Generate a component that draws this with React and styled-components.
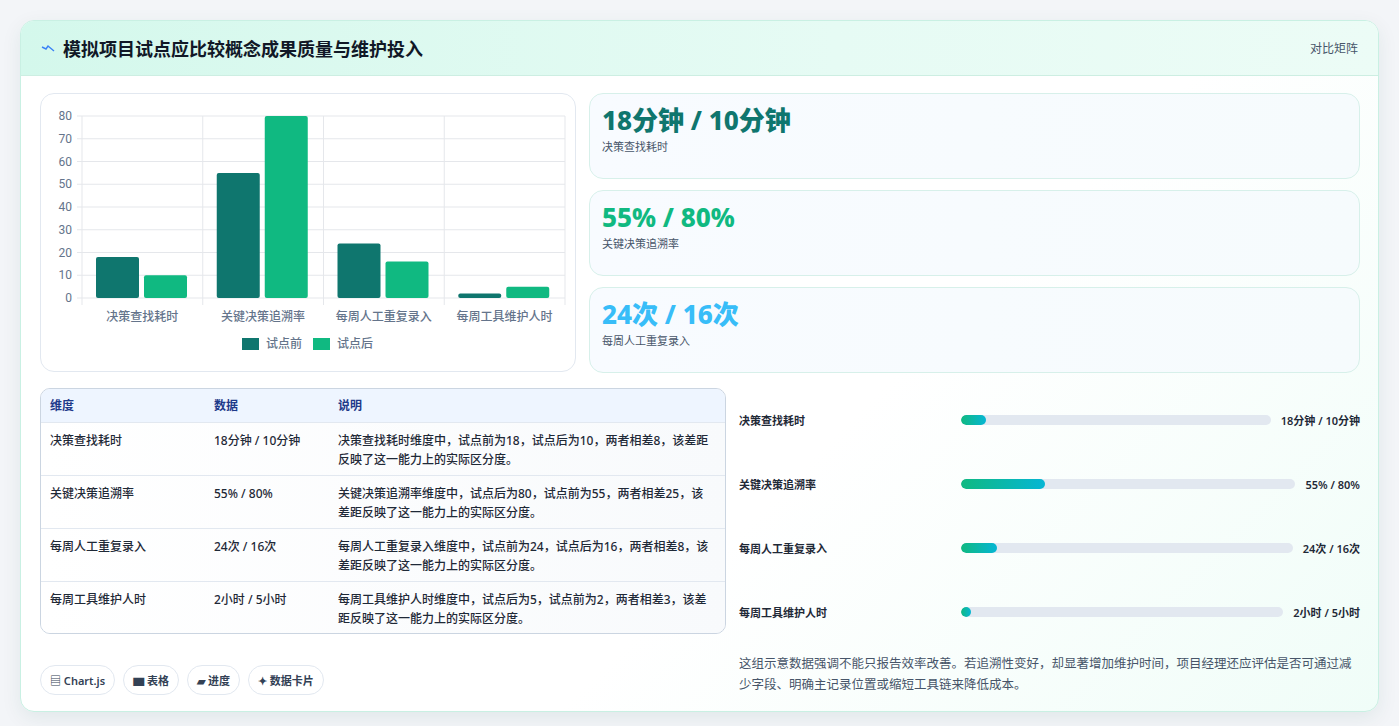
import styled, { createGlobalStyle } from 'styled-components';

const Global = createGlobalStyle`
  *, *::before, *::after { box-sizing: border-box; }
  body { margin: 0; background: #f3f5f8; font-family: "Noto Sans", "Noto Sans CJK SC", sans-serif; }
`;

const rows = [
  { name: '决策查找耗时', data: '18分钟 / 10分钟', desc: '决策查找耗时维度中，试点前为18，试点后为10，两者相差8，该差距反映了这一能力上的实际区分度。', before: 18, after: 10, fill: 8 },
  { name: '关键决策追溯率', data: '55% / 80%', desc: '关键决策追溯率维度中，试点后为80，试点前为55，两者相差25，该差距反映了这一能力上的实际区分度。', before: 55, after: 80, fill: 25 },
  { name: '每周人工重复录入', data: '24次 / 16次', desc: '每周人工重复录入维度中，试点前为24，试点后为16，两者相差8，该差距反映了这一能力上的实际区分度。', before: 24, after: 16, fill: 11 },
  { name: '每周工具维护人时', data: '2小时 / 5小时', desc: '每周工具维护人时维度中，试点后为5，试点前为2，两者相差3，该差距反映了这一能力上的实际区分度。', before: 2, after: 5, fill: 3 },
];

const Page = styled.div`
  padding: 20px 20px 22px 20px;
`;
const Card = styled.div`
  background: linear-gradient(135deg, #ffffff 60%, #f0fdf8);
  border: 1px solid #c9f0e3;
  border-radius: 14px;
  overflow: hidden;
  box-shadow: 0 6px 20px rgba(15, 80, 70, 0.08);
`;
const Header = styled.div`
  height: 55px;
  display: flex;
  align-items: center;
  justify-content: space-between;
  padding: 0 20px;
  background: linear-gradient(90deg, #d4f8ec, #e6fbf4 60%, #ecfcf6);
  border-bottom: 1px solid #cdeee2;
`;
const Title = styled.h1`
  margin: 0;
  font-size: 18px;
  font-weight: 700;
  color: #111827;
  display: flex;
  align-items: center;
  gap: 8px;
`;
const Tag = styled.span`
  font-size: 12px;
  color: #475569;
`;
const Body = styled.div`
  padding: 17px 18px 16px 19px;
  display: flex;
  flex-direction: column;
  gap: 15px;
`;
const TopRow = styled.div`
  display: grid;
  grid-template-columns: 536px 1fr;
  gap: 13px;
`;
const BottomRow = styled.div`
  display: grid;
  grid-template-columns: 686px 1fr;
  gap: 13px;
`;
const Panel = styled.div`
  background: #fff;
  border: 1px solid #e2e8f0;
  border-radius: 14px;
`;
const ChartPanel = styled(Panel)`
  height: 279px;
  padding-top: 6px;
`;
const Stats = styled.div`
  display: grid;
  grid-template-rows: repeat(3, 86px);
  gap: 11px;
`;
const Stat = styled.div`
  border: 1px solid #d7f0ea;
  border-radius: 14px;
  background: linear-gradient(90deg, #f8fbff, #f6fbfd);
  padding: 8px 12px;
`;
const StatValue = styled.div`
  font-size: 26px;
  font-weight: 800;
  line-height: 36px;
  color: ${p => p.$c};
`;
const StatLabel = styled.div`
  font-size: 11px;
  color: #475569;
`;
const LeftCol = styled.div`
  display: flex;
  flex-direction: column;
  justify-content: space-between;
`;
const Table = styled.div`
  border: 1px solid #cbd5e1;
  border-radius: 10px;
  overflow: hidden;
  background: #f8fafc;
  font-size: 12px;
  height: 246px;
`;
const TRow = styled.div`
  display: grid;
  grid-template-columns: 164px 124px 1fr;
  padding: 0 10px 0 9px;
  border-top: ${p => (p.$head ? 'none' : '1px solid #e2e8f0')};
  background: ${p => (p.$head ? '#eef5ff' : 'linear-gradient(90deg,#fff,#f8fafc)')};
  color: ${p => (p.$head ? '#1e3a8a' : '#1f2937')};
  font-weight: ${p => (p.$head ? 600 : 500)};
  height: ${p => (p.$head ? '33px' : '53px')};
  align-items: ${p => (p.$head ? 'center' : 'start')};
  line-height: 19px;
  & > div { padding-top: ${p => (p.$head ? '0' : '8px')}; }
`;
const Progress = styled.div`
  display: flex;
  flex-direction: column;
`;
const PRow = styled.div`
  display: flex;
  align-items: center;
  height: 64px;
  gap: 8px;
  font-size: 11px;
  font-weight: 600;
  color: #1f2937;
`;
const PLabel = styled.div`
  width: 214px;
`;
const Track = styled.div`
  flex: 1;
  height: 10px;
  border-radius: 5px;
  background: #e2e8f0;
  overflow: hidden;
`;
const Fill = styled.div`
  height: 100%;
  min-width: 10px;
  border-radius: 5px;
  background: linear-gradient(90deg, #10b981, #06b6d4);
`;
const PValue = styled.div`
  white-space: nowrap;
  padding-left: 2px;
`;
const Note = styled.p`
  margin: 9px 0 0 0;
  font-size: 12.5px;
  line-height: 21px;
  color: #475569;
`;
const Chips = styled.div`
  display: flex;
  gap: 8px;
`;
const Chip = styled.span`
  font-size: 11px;
  font-weight: 600;
  color: #334155;
  border: 1px solid #e2e8f0;
  border-radius: 15px;
  padding: 6px 9px;
  background: #fff;
`;

function Chart() {
  const x0 = 41, x1 = 524, yTop = 16, yBot = 198;
  const scale = (yBot - yTop) / 80;
  const cw = (x1 - x0) / 4;
  return (
    <svg width="536" height="270" style={{ display: 'block', fontFamily: 'Roboto, "Noto Sans CJK SC", sans-serif' }}>
      {[0, 10, 20, 30, 40, 50, 60, 70, 80].map(v => {
        const y = yBot - v * scale;
        return (
          <g key={v}>
            <line x1={x0 - 5} x2={x1} y1={y} y2={y} stroke="#e5e7eb" />
            <text x={x0 - 10} y={y + 4} fontSize="12" fill="#64748b" textAnchor="end">{v}</text>
          </g>
        );
      })}
      {[0, 1, 2, 3, 4].map(i => (
        <line key={i} x1={x0 + i * cw} x2={x0 + i * cw} y1={yTop} y2={yBot + 7} stroke="#e5e7eb" />
      ))}
      {rows.map((r, i) => {
        const cx = x0 + i * cw + 14;
        return (
          <g key={r.name}>
            <rect x={cx} y={yBot - r.before * scale} width="43" height={r.before * scale} rx="2" fill="#0f766e" />
            <rect x={cx + 48} y={yBot - r.after * scale} width="43" height={r.after * scale} rx="2" fill="#10b981" />
            <text x={x0 + i * cw + cw / 2} y={yBot + 23} fontSize="12" fontWeight="500" fill="#64748b" textAnchor="middle">{r.name}</text>
          </g>
        );
      })}
      <rect x="201" y="238" width="17" height="12" fill="#0f766e" />
      <text x="225" y="248" fontSize="12" fontWeight="500" fill="#64748b">试点前</text>
      <rect x="272" y="238" width="17" height="12" fill="#10b981" />
      <text x="296" y="248" fontSize="12" fontWeight="500" fill="#64748b">试点后</text>
    </svg>
  );
}

export default function App() {
  return (
    <Page>
      <Global />
      <Card>
        <Header>
          <Title>
            <svg width="14" height="10" viewBox="0 0 14 10"><path d="M1 4 L5 6 L7 3 L13 8" stroke="#3b82f6" strokeWidth="1.4" fill="none" /></svg>
            模拟项目试点应比较概念成果质量与维护投入
          </Title>
          <Tag>对比矩阵</Tag>
        </Header>
        <Body>
          <TopRow>
            <ChartPanel><Chart /></ChartPanel>
            <Stats>
              <Stat><StatValue $c="#0f766e">18分钟 / 10分钟</StatValue><StatLabel>决策查找耗时</StatLabel></Stat>
              <Stat><StatValue $c="#10b981">55% / 80%</StatValue><StatLabel>关键决策追溯率</StatLabel></Stat>
              <Stat><StatValue $c="#38bdf8">24次 / 16次</StatValue><StatLabel>每周人工重复录入</StatLabel></Stat>
            </Stats>
          </TopRow>
          <BottomRow>
            <LeftCol>
              <Table>
                <TRow $head><div>维度</div><div>数据</div><div>说明</div></TRow>
                {rows.map(r => (
                  <TRow key={r.name}><div>{r.name}</div><div>{r.data}</div><div>{r.desc}</div></TRow>
                ))}
              </Table>
              <Chips>
                <Chip>▤ Chart.js</Chip>
                <Chip>▆ 表格</Chip>
                <Chip>▰ 进度</Chip>
                <Chip>✦ 数据卡片</Chip>
              </Chips>
            </LeftCol>
            <Progress>
              {rows.map(r => (
                <PRow key={r.name}>
                  <PLabel>{r.name}</PLabel>
                  <Track><Fill style={{ width: `${r.fill}%` }} /></Track>
                  <PValue>{r.data}</PValue>
                </PRow>
              ))}
              <Note>这组示意数据强调不能只报告效率改善。若追溯性变好，却显著增加维护时间，项目经理还应评估是否可通过减少字段、明确主记录位置或缩短工具链来降低成本。</Note>
            </Progress>
          </BottomRow>
        </Body>
      </Card>
    </Page>
  );
}
